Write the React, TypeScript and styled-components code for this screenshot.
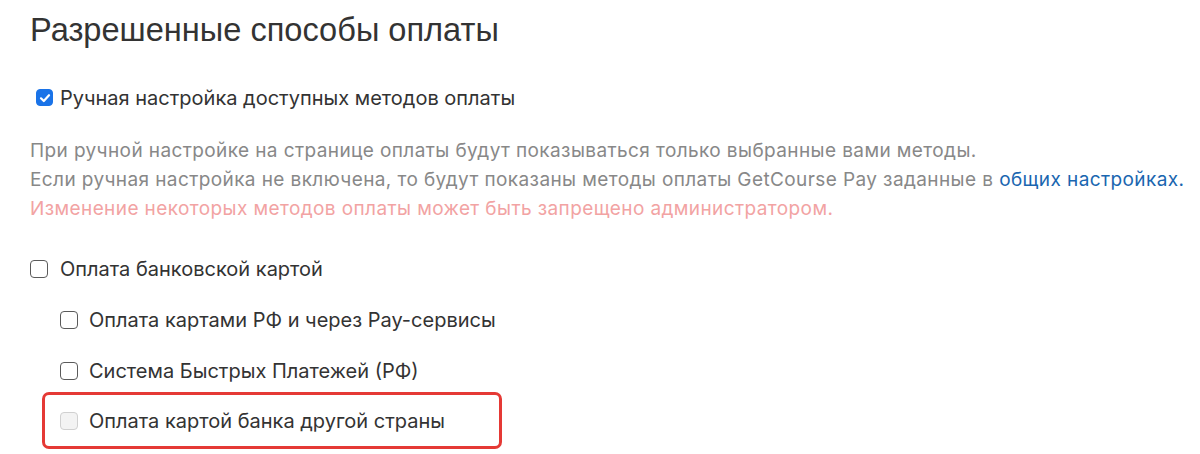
import React from 'react';
import styled, { createGlobalStyle } from 'styled-components';

const GlobalStyle = createGlobalStyle`
  body {
    margin: 0;
    background: #ffffff;
    font-family: Inter, "Noto Sans", sans-serif;
  }
`;

const Page = styled.div`
  padding: 9px 0 0 30px;
  width: 1170px;
  height: 445px;
  overflow: hidden;
`;

const Title = styled.h2`
  margin: 0;
  font-family: "Liberation Sans", Arial, sans-serif;
  font-weight: 400;
  font-size: 32.6px;
  line-height: 42px;
  color: #333333;
`;

const Row = styled.label<{ $indent?: number; $gap?: number }>`
  display: flex;
  align-items: center;
  gap: ${(p) => p.$gap ?? 12}px;
  margin-left: ${(p) => p.$indent ?? 0}px;
  height: 51px;
  font-size: 20px;
  color: #333333;
`;

const Box = styled.span<{ $checked?: boolean; $disabled?: boolean; $size?: number }>`
  box-sizing: border-box;
  width: ${(p) => p.$size ?? 18}px;
  height: ${(p) => p.$size ?? 18}px;
  flex: none;
  border-radius: 4px;
  border: 1.5px solid ${(p) => (p.$checked ? '#1a73e8' : p.$disabled ? '#d0d0d0' : '#5a5a5a')};
  background: ${(p) => (p.$checked ? '#1a73e8' : p.$disabled ? '#f3f3f3' : '#ffffff')};
  display: flex;
  align-items: center;
  justify-content: center;
`;

const Description = styled.div`
  margin-top: 13px;
  font-size: 19px;
  letter-spacing: 0.4px;
  line-height: 29px;
  color: #888888;
`;

const Link = styled.a`
  color: #1a66b0;
  text-decoration: none;
`;

const Warning = styled.div`
  color: #f2a3a3;
`;

const Methods = styled.div`
  margin-top: 20px;
`;

const Highlight = styled.div`
  box-sizing: border-box;
  width: 460px;
  height: 57px;
  margin: -4px 0 0 12px;
  border: 3px solid #e53935;
  border-radius: 7px;
  display: flex;
  align-items: center;
  padding-left: 15px;
`;

const Check = ({ checked, disabled, size }: { checked?: boolean; disabled?: boolean; size?: number }) => (
  <Box $checked={checked} $disabled={disabled} $size={size}>
    {checked && (
      <svg width="12" height="12" viewBox="0 0 12 12">
        <path d="M2 6.3 L4.8 9 L10 3.2" fill="none" stroke="#fff" strokeWidth="2.2" strokeLinecap="round" strokeLinejoin="round" />
      </svg>
    )}
  </Box>
);

export default function App() {
  return (
    <>
      <GlobalStyle />
      <Page>
        <Title>Разрешенные способы оплаты</Title>
        <Row $indent={6} $gap={7} style={{ marginTop: 21 }}>
          <Check checked size={17} />
          Ручная настройка доступных методов оплаты
        </Row>
        <Description>
          <div>При ручной настройке на странице оплаты будут показываться только выбранные вами методы.</div>
          <div>
            Если ручная настройка не включена, то будут показаны методы оплаты GetCourse Pay заданные в{' '}
            <Link href="#">общих настройках.</Link>
          </div>
          <Warning>Изменение некоторых методов оплаты может быть запрещено администратором.</Warning>
        </Description>
        <Methods>
          <Row>
            <Check />
            Оплата банковской картой
          </Row>
          <Row $indent={30} $gap={11}>
            <Check />
            Оплата картами РФ и через Pay-сервисы
          </Row>
          <Row $indent={30} $gap={11}>
            <Check />
            Система Быстрых Платежей (РФ)
          </Row>
          <Highlight>
            <Row $gap={11}>
              <Check disabled />
              Оплата картой банка другой страны
            </Row>
          </Highlight>
        </Methods>
      </Page>
    </>
  );
}
